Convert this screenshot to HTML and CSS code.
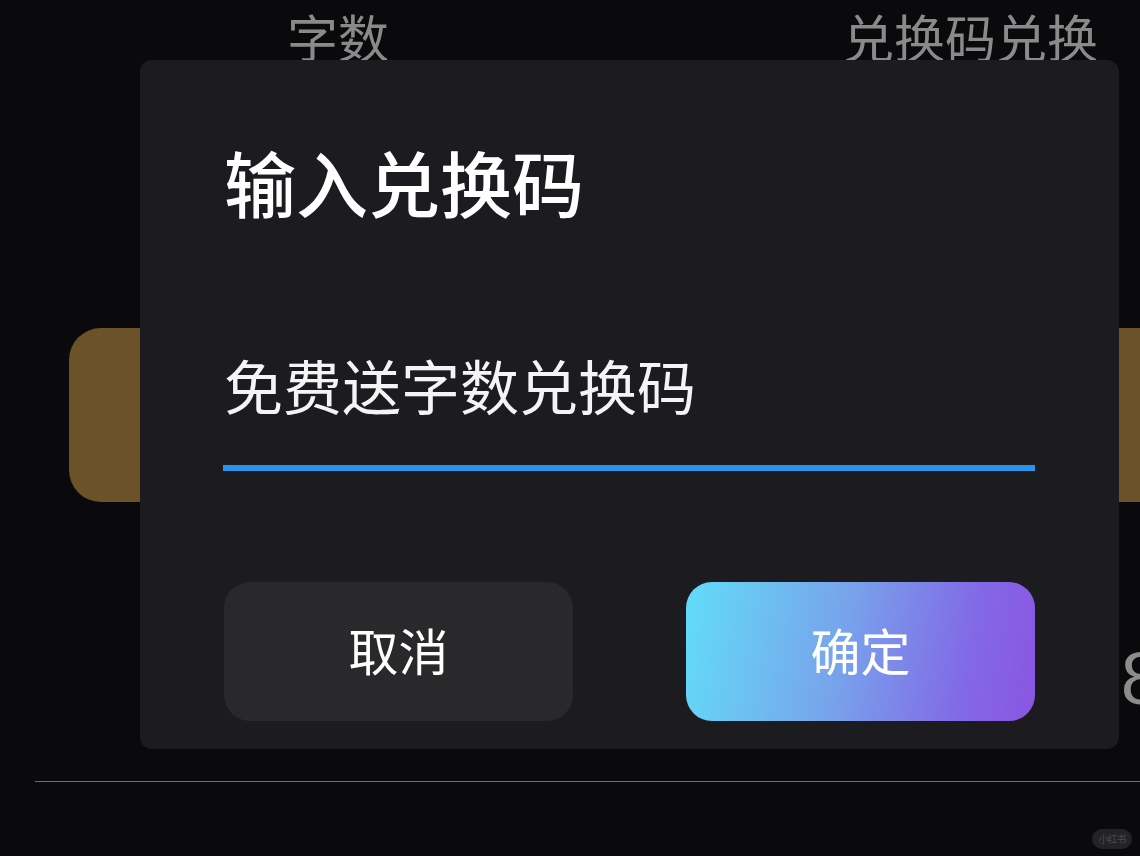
FILE: index.html
```html
<!DOCTYPE html>
<html lang="zh-CN">
<head>
<meta charset="utf-8">
<title>输入兑换码</title>
<link rel="stylesheet" href="styles.css">
</head>
<body>
<div class="screen">
  <div class="topbar">
    <span class="tab">字数</span>
    <span class="tab">兑换码兑换</span>
  </div>
  <div class="gold-card"></div>
  <div class="stats-row"><span class="digit">8</span></div>
  <div class="divider"></div>

  <div class="dialog">
    <div class="dialog-title">输入兑换码</div>
    <div class="input-field">
      <div class="input-text">免费送字数兑换码</div>
      <div class="input-line"></div>
    </div>
    <div class="actions">
      <div class="btn btn-cancel">取消</div>
      <div class="btn btn-ok">确定</div>
    </div>
  </div>

  <div class="watermark">小红书</div>
</div>
</body>
</html>
```

FILE: styles.css
```css
html, body {
  margin: 0;
  padding: 0;
  background: #0a0a0d;
}

body {
  font-family: "Noto Sans CJK SC", "Noto Sans", sans-serif;
}

.screen {
  position: relative;
  width: 1140px;
  height: 856px;
  overflow: hidden;
  background: #0a0a0d;
  display: flex;
  flex-direction: column;
}

.topbar {
  display: flex;
  justify-content: space-between;
  align-items: flex-start;
  height: 70px;
  padding: 11px 42px 0 287px;
  box-sizing: border-box;
}

.tab {
  font-size: 51px;
  line-height: 51px;
  color: #8a8a8a;
  font-weight: 400;
}

.gold-card {
  margin-top: 258px;
  margin-left: 69px;
  margin-right: -40px;
  height: 174px;
  background: #6b5229;
  border-radius: 32px;
}

.stats-row {
  display: flex;
  justify-content: flex-end;
  margin-top: 144px;
  height: 66px;
  margin-right: -22px;
}

.digit {
  font-family: "Liberation Sans", sans-serif;
  font-size: 74px;
  line-height: 66px;
  color: #8c8c8c;
}

.divider {
  margin-top: 69px;
  margin-left: 35px;
  height: 1px;
  background: #6e6e70;
}

.dialog {
  position: absolute;
  left: 140px;
  top: 60px;
  width: 979px;
  height: 689px;
  box-sizing: border-box;
  padding: 85px 84px 28px 84px;
  background: #1c1c20;
  border-radius: 12px;
  display: flex;
  flex-direction: column;
}

.dialog-title {
  font-size: 72px;
  line-height: 72px;
  font-weight: 500;
  color: #ffffff;
}

.input-field {
  margin-top: 139px;
}

.input-text {
  font-size: 59px;
  line-height: 58px;
  color: #f4f4f4;
}

.input-line {
  margin-top: 51px;
  height: 6px;
  background: #2a93ec;
  margin-left: -1px;
}

.actions {
  margin-top: auto;
  display: flex;
  justify-content: space-between;
}

.btn {
  width: 349px;
  height: 139px;
  box-sizing: border-box;
  padding-bottom: 6px;
  border-radius: 26px;
  display: flex;
  align-items: center;
  justify-content: center;
  font-size: 50px;
  color: #ffffff;
}

.btn-cancel {
  background: #29292b;
}

.btn-ok {
  background: linear-gradient(100deg, #62dcf8 0%, #78a2eb 45%, #8268e6 80%, #8b55e2 100%);
}

.watermark {
  position: absolute;
  right: 8px;
  bottom: 7px;
  width: 40px;
  height: 20px;
  border-radius: 10px;
  background: #232326;
  color: #4a4a4e;
  font-size: 10px;
  line-height: 20px;
  text-align: center;
  letter-spacing: -1px;
}
```
